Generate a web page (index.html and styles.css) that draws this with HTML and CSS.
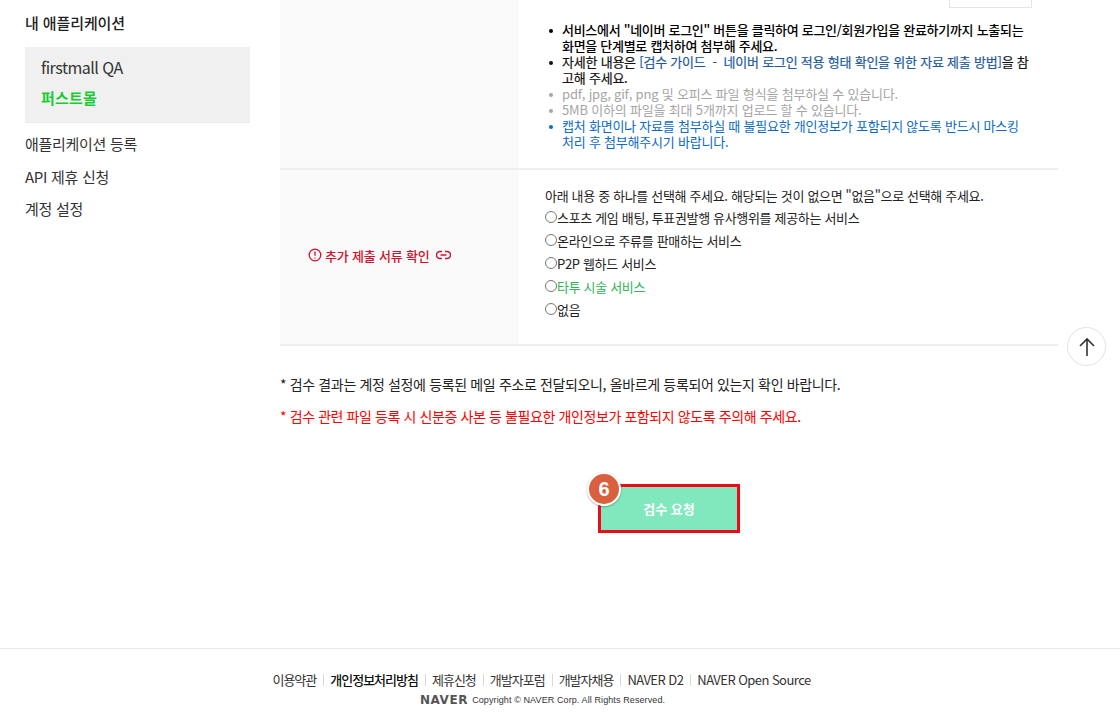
FILE: index.html
```html
<!DOCTYPE html>
<html lang="ko">
<head>
    <meta charset="UTF-8">
    <title>내 애플리케이션</title>
    <link rel="stylesheet" href="styles.css">
</head>
<body>
    <div class="wrap">
        <!-- Left menu -->
        <div class="side">
            <h2>내 애플리케이션</h2>
            <div class="app-box">
                <div class="app-name">firstmall QA</div>
                <div class="app-sub">퍼스트몰</div>
            </div>
            <ul class="side-menu">
                <li>애플리케이션 등록</li>
                <li>API 제휴 신청</li>
                <li>계정 설정</li>
            </ul>
        </div>

        <div class="main">
            <!-- Review form -->
            <div class="row row-guide">
                <div class="row-head"></div>
                <div class="row-body">
                    <div class="file-btn-line"><span class="file-btn"></span></div>
                    <ul class="guide">
                        <li class="strong">서비스에서 "네이버 로그인" 버튼을 클릭하여 로그인/회원가입을 완료하기까지 노출되는 화면을 단계별로 캡처하여 첨부해 주세요.</li>
                        <li class="medium">자세한 내용은 <a href="#">[검수 가이드 &nbsp;-&nbsp; 네이버 로그인 적용 형태 확인을 위한 자료 제출 방법]</a>을 참고해 주세요.</li>
                        <li class="gray">pdf, jpg, gif, png 및 오피스 파일 형식을 첨부하실 수 있습니다.</li>
                        <li class="gray">5MB 이하의 파일을 최대 5개까지 업로드 할 수 있습니다.</li>
                        <li class="blue">캡처 화면이나 자료를 첨부하실 때 불필요한 개인정보가 포함되지 않도록 반드시 마스킹 처리 후 첨부해주시기 바랍니다.</li>
                    </ul>
                </div>
            </div>
            <div class="row row-extra">
                <div class="row-head extra-head">
                    <svg class="ico" width="14" height="14" viewBox="0 0 14 14" fill="none" stroke="#d0102c" stroke-width="1.3"><circle cx="7" cy="7" r="5.8"/><path d="M7 3.6v4.2M7 9.4v1.2"/></svg>
                    <span>추가 제출 서류 확인</span>
                    <svg class="ico link-ico" width="15" height="10" viewBox="0 0 15 10" fill="none" stroke="#d0102c" stroke-width="1.5"><path d="M6 1.5H4a3.5 3.5 0 0 0 0 7h2M9 1.5h2a3.5 3.5 0 0 1 0 7H9M4.5 5h6"/></svg>
                </div>
                <div class="row-body extra-body">
                    <p>아래 내용 중 하나를 선택해 주세요. 해당되는 것이 없으면 "없음"으로 선택해 주세요.</p>
                    <label><span class="radio"></span>스포츠 게임 배팅, 투표권발행 유사행위를 제공하는 서비스</label>
                    <label><span class="radio"></span>온라인으로 주류를 판매하는 서비스</label>
                    <label><span class="radio"></span>P2P 웹하드 서비스</label>
                    <label class="green"><span class="radio"></span>타투 시술 서비스</label>
                    <label><span class="radio"></span>없음</label>
                </div>
            </div>

            <div class="notes">
                <p>* 검수 결과는 계정 설정에 등록된 메일 주소로 전달되오니, 올바르게 등록되어 있는지 확인 바랍니다.</p>
                <p class="red">* 검수 관련 파일 등록 시 신분증 사본 등 불필요한 개인정보가 포함되지 않도록 주의해 주세요.</p>
            </div>

            <div class="submit-line">
                <button type="button" class="submit">검수 요청<span class="step">6</span></button>
            </div>
        </div>
    </div>

    <a href="#" class="to-top">
        <svg width="18" height="20" viewBox="0 0 18 20" fill="none" stroke="#333" stroke-width="1.6"><path d="M9 19V2M2 9l7-7 7 7"/></svg>
    </a>

    <!-- Footer -->
    <div class="footer">
        <div class="foot-links">
            <a href="#">이용약관</a>
            <a href="#" class="bold">개인정보처리방침</a>
            <a href="#">제휴신청</a>
            <a href="#">개발자포럼</a>
            <a href="#">개발자채용</a>
            <a href="#" class="latin">NAVER D2</a>
            <a href="#" class="latin">NAVER Open Source</a>
        </div>
        <div class="copy"><span class="naver">NAVER</span>Copyright © NAVER Corp. All Rights Reserved.</div>
    </div>
</body>
</html>
```

FILE: styles.css
```css
/* General */
html, body {
    height: 720px;
    overflow: hidden;
}

body {
    margin: 0;
    position: relative;
    font-family: "Noto Sans CJK KR", "Noto Sans", sans-serif;
    font-size: 13px;
    color: #222;
    background: #fff;
}

a {
    color: inherit;
    text-decoration: none;
}

.wrap {
    display: flex;
    height: 648px;
}

/* Left menu */
.side {
    width: 250px;
    margin-right: 30px;
    padding-left: 25px;
    box-sizing: border-box;
    font-size: 15px;
    letter-spacing: -0.3px;
}

.side h2 {
    margin: 0;
    height: 47px;
    font-size: 15px;
    font-weight: 500;
    line-height: 46px;
    letter-spacing: -0.1px;
    color: #222;
}

.app-box {
    height: 76px;
    padding-left: 16px;
    background: #f0f0f0;
    border-bottom: 1px solid #eaeaea;
    box-sizing: border-box;
}

.app-name {
    padding-top: 8px;
    font-size: 16px;
    line-height: 24px;
    letter-spacing: -0.5px;
    color: #333;
}

.app-sub {
    padding-top: 9px;
    font-size: 15px;
    font-weight: 700;
    line-height: 20px;
    letter-spacing: 0.2px;
    color: #19cc33;
}

.side-menu {
    list-style: none;
    margin: 4px 0 0;
    padding: 0;
}

.side-menu li {
    height: 32.5px;
    line-height: 33px;
    color: #333;
}

/* Form rows */
.main {
    width: 778px;
}

.row {
    display: flex;
    border-bottom: 2px solid #eeeeee;
    box-sizing: border-box;
}

.row-guide {
    height: 170px;
}

.row-extra {
    height: 176px;
}

.row-head {
    width: 239px;
    flex: none;
    background: #fafafa;
}

.row-body {
    flex: 1;
}

.file-btn-line {
    height: 8px;
    padding-left: 430px;
}

.file-btn {
    display: block;
    width: 81px;
    height: 7px;
    background: #fff;
    border: 1px solid #e4e4e4;
    border-top: 0;
}

.guide {
    list-style: none;
    margin: 14px 0 0;
    padding: 0 0 0 43px;
    width: 470px;
    font-size: 13px;
    line-height: 16px;
    letter-spacing: -0.22px;
}

.guide li::before {
    content: "";
    display: inline-block;
    width: 4px;
    height: 4px;
    margin: 0 9px 2px -13px;
    border-radius: 50%;
    background: currentColor;
}

.guide .strong {
    font-weight: 500;
    letter-spacing: -0.29px;
    color: #000;
}

.guide .medium {
    color: #111;
    -webkit-text-stroke: 0.2px #111;
}

.guide a {
    color: #1d5a9c;
    -webkit-text-stroke: 0.2px #1d5a9c;
}

.guide .gray {
    letter-spacing: -0.18px;
    color: #a5a5a5;
}

.guide .blue {
    color: #0a6ac8;
}

.extra-head {
    display: flex;
    align-items: center;
    gap: 3px;
    padding: 0 0 4px 28px;
    box-sizing: border-box;
    font-size: 13px;
    font-weight: 500;
    letter-spacing: -0.2px;
    color: #d0102c;
}

.link-ico {
    margin-left: 4px;
}

.extra-body {
    padding: 14px 0 0 26px;
    letter-spacing: -0.33px;
}

.extra-body p {
    margin: 0;
    height: 22px;
    line-height: 23px;
}

.extra-body label {
    display: flex;
    align-items: center;
    height: 23px;
    line-height: 23px;
}

.extra-body .green {
    color: #2fb457;
}

.radio {
    width: 10px;
    height: 10px;
    border: 1px solid #777;
    border-radius: 50%;
    margin-top: -1px;
}

/* Notes below the form */
.notes {
    padding-top: 28px;
    font-size: 14px;
    font-weight: 400;
    letter-spacing: -0.36px;
}

.notes p {
    margin: 0 0 11px;
    height: 21px;
    line-height: 21px;
}

.notes .red {
    letter-spacing: -0.4px;
    color: #ff0000;
}

/* Submit button */
.submit-line {
    display: flex;
    padding: 46px 0 0 318px;
}

.submit {
    position: relative;
    width: 142px;
    height: 49px;
    padding: 0;
    background: #81e8bd;
    border: 3px solid #ee0a1a;
    color: #fff;
    font-family: inherit;
    font-size: 13px;
    font-weight: 700;
}

.step {
    position: absolute;
    left: -14px;
    top: -15px;
    width: 30px;
    height: 30px;
    background: #d9603f;
    border: 2px solid #fff;
    border-radius: 50%;
    box-shadow: 0 1px 2px rgba(0, 0, 0, 0.3);
    font-family: "Liberation Sans", sans-serif;
    font-size: 20px;
    line-height: 30px;
    text-align: center;
}

/* Scroll to top */
.to-top {
    position: absolute;
    left: 1067px;
    top: 327px;
    width: 37px;
    height: 37px;
    display: flex;
    align-items: center;
    justify-content: center;
    background: #fff;
    border: 1px solid #e2e2e2;
    border-radius: 50%;
}

/* Footer */
.footer {
    border-top: 1px solid #e9e9e9;
    padding-top: 21px;
    text-align: center;
}

.foot-links {
    display: flex;
    justify-content: center;
    padding-right: 37px;
    height: 20px;
    line-height: 20px;
    font-size: 13px;
    letter-spacing: -1px;
    color: #333;
}

.foot-links a + a {
    margin-left: 7px;
    padding-left: 7px;
    background: linear-gradient(#d8d8d8, #d8d8d8) left center / 1px 12px no-repeat;
}

.foot-links .latin {
    letter-spacing: -0.55px;
}

.foot-links .bold {
    font-weight: 500;
    color: #111;
}

.copy {
    display: flex;
    justify-content: center;
    align-items: center;
    padding-right: 35px;
    height: 19px;
    font-family: "Liberation Sans", sans-serif;
    font-size: 9px;
    letter-spacing: 0.1px;
    color: #333;
}

.naver {
    margin-right: 4px;
    font-family: "DejaVu Sans", sans-serif;
    font-size: 12px;
    font-weight: 700;
    letter-spacing: 0.6px;
    color: #555;
}
```
